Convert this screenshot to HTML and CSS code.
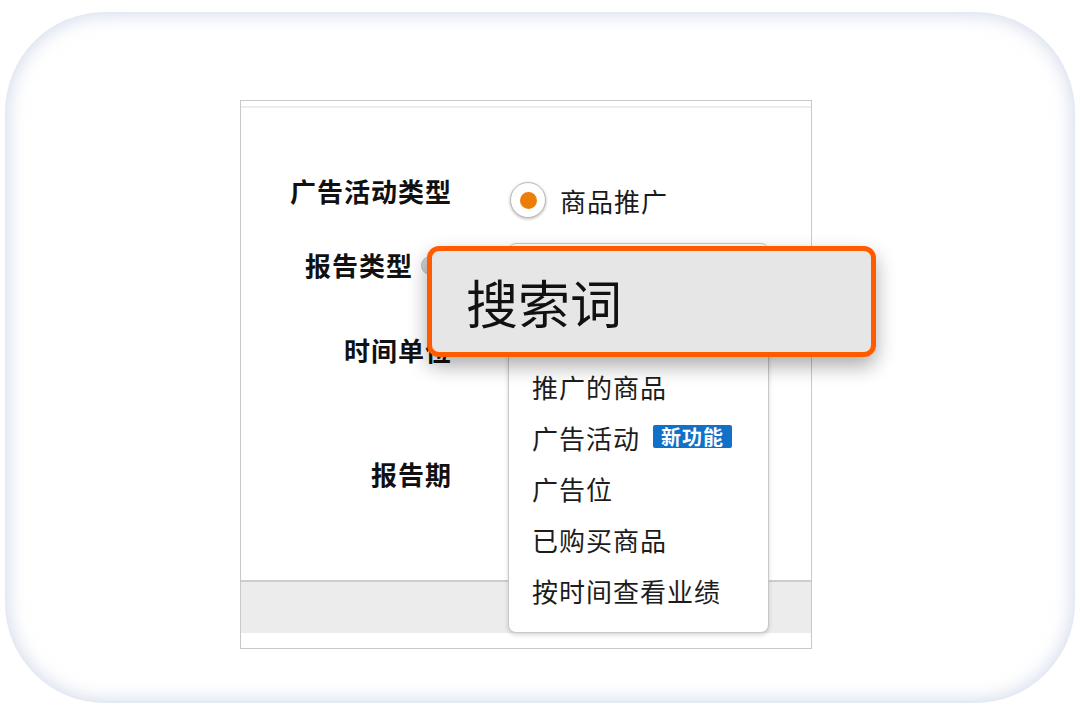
FILE: index.html
```html
<!DOCTYPE html>
<html lang="zh-CN">
<head>
<meta charset="utf-8">
<title>报告类型</title>
<link rel="stylesheet" href="styles.css">
</head>
<body>
<div class="card">
  <div class="panel">
    <div class="panel-top"></div>
    <div class="form">
      <div class="label">广告活动类型</div>
      <div class="control control-radio">
        <span class="radio"><span class="radio-dot"></span></span>
        <span class="radio-text">商品推广</span>
      </div>

      <div class="label label-help">报告类型<span class="help"></span></div>
      <div class="control control-menu">
        <ul class="menu">
          <li class="menu-item menu-item-hidden"></li>
          <li class="menu-item menu-item-hidden"></li>
          <li class="menu-item">推广的商品</li>
          <li class="menu-item">广告活动<span class="badge">新功能</span></li>
          <li class="menu-item">广告位</li>
          <li class="menu-item">已购买商品</li>
          <li class="menu-item">按时间查看业绩</li>
        </ul>
      </div>

      <div class="label">时间单位</div>
      <div class="control"></div>

      <div class="label">报告期</div>
      <div class="control"></div>
    </div>
    <div class="band"></div>
    <div class="panel-foot"></div>

    <div class="callout">搜索词</div>
  </div>
</div>
</body>
</html>
```

FILE: styles.css
```css
html, body {
  margin: 0;
  padding: 0;
  background: #ffffff;
}

body {
  font-family: "Noto Sans CJK SC", "Noto Sans", sans-serif;
  color: #111111;
  width: 1080px;
  height: 711px;
  overflow: hidden;
}

.card {
  margin: 12px 0 0 5px;
  width: 1070px;
  height: 691px;
  box-sizing: border-box;
  border-radius: 100px;
  background: #ffffff;
  box-shadow: inset 0 0 18px 3px rgba(184, 197, 222, 0.6);
  padding: 88px 0 0 235px;
}

.panel {
  position: relative;
  width: 572px;
  height: 549px;
  box-sizing: border-box;
  border: 1px solid #c8c8c8;
  background: #ffffff;
}

.panel-top {
  height: 5px;
  border-bottom: 2px solid #ececec;
}

.form {
  display: grid;
  grid-template-columns: 211px 1fr;
  column-gap: 56px;
  grid-template-rows: 74px 85px 124px 38px;
  padding-top: 64px;
  height: 472px;
  box-sizing: border-box;
}

.label {
  font-size: 26px;
  letter-spacing: 1px;
  font-weight: 700;
  line-height: 38px;
  height: 38px;
  text-align: right;
  color: #111111;
  white-space: nowrap;
}

.label-help {
  display: flex;
  justify-content: flex-end;
  align-items: center;
}

.help {
  width: 19px;
  height: 19px;
  box-sizing: border-box;
  border-radius: 50%;
  background: #d2d2d2;
  border: 1px solid #bcbcbc;
  margin: 1px 12px 0 8px;
}

.control-radio {
  display: flex;
  align-items: center;
  margin-top: 10px;
  height: 36px;
}

.radio {
  width: 36px;
  height: 36px;
  box-sizing: border-box;
  border-radius: 50%;
  border: 1px solid #b8b8b8;
  background: #ffffff;
  box-shadow: 0 1px 3px rgba(0, 0, 0, 0.28);
  display: flex;
  align-items: center;
  justify-content: center;
  margin-left: 2px;
}

.radio-dot {
  width: 17px;
  height: 17px;
  border-radius: 50%;
  background: #ed7d06;
}

.radio-text {
  font-size: 26px;
  letter-spacing: 1px;
  line-height: 36px;
  margin-left: 14px;
  margin-top: 2px;
  color: #1a1a1a;
}

.control-menu {
  position: relative;
}

.menu {
  position: absolute;
  left: 0;
  top: -3px;
  width: 261px;
  height: 390px;
  box-sizing: border-box;
  margin: 0;
  padding: 15px 0 0 23px;
  list-style: none;
  background: #ffffff;
  border: 1px solid #c8c8c8;
  border-radius: 8px;
  box-shadow: 0 2px 4px rgba(0, 0, 0, 0.16);
  z-index: 2;
}

.menu-item {
  height: 51px;
  display: flex;
  align-items: center;
  font-size: 26px;
  letter-spacing: 1px;
  color: #1c1c1c;
  white-space: nowrap;
}

.badge {
  display: inline-block;
  margin-left: 13px;
  margin-top: -2px;
  height: 23px;
  line-height: 23px;
  padding: 0 8px 0 8px;
  font-size: 20px;
  font-weight: 700;
  letter-spacing: 1px;
  color: #ffffff;
  background: #1170c8;
  border-radius: 2px;
}

.band {
  height: 51px;
  border-top: 2px solid #cccccc;
  background: #ececec;
}

.panel-foot {
  height: 15px;
}

.callout {
  position: absolute;
  left: 186px;
  top: 145px;
  width: 449px;
  height: 111px;
  box-sizing: border-box;
  border: 5px solid #ff5c00;
  border-radius: 12px;
  background: #e6e6e6;
  box-shadow: 0 9px 20px rgba(0, 0, 0, 0.33);
  padding-left: 34px;
  display: flex;
  align-items: center;
  font-size: 52px;
  line-height: 1;
  color: #111111;
  z-index: 5;
}
```
